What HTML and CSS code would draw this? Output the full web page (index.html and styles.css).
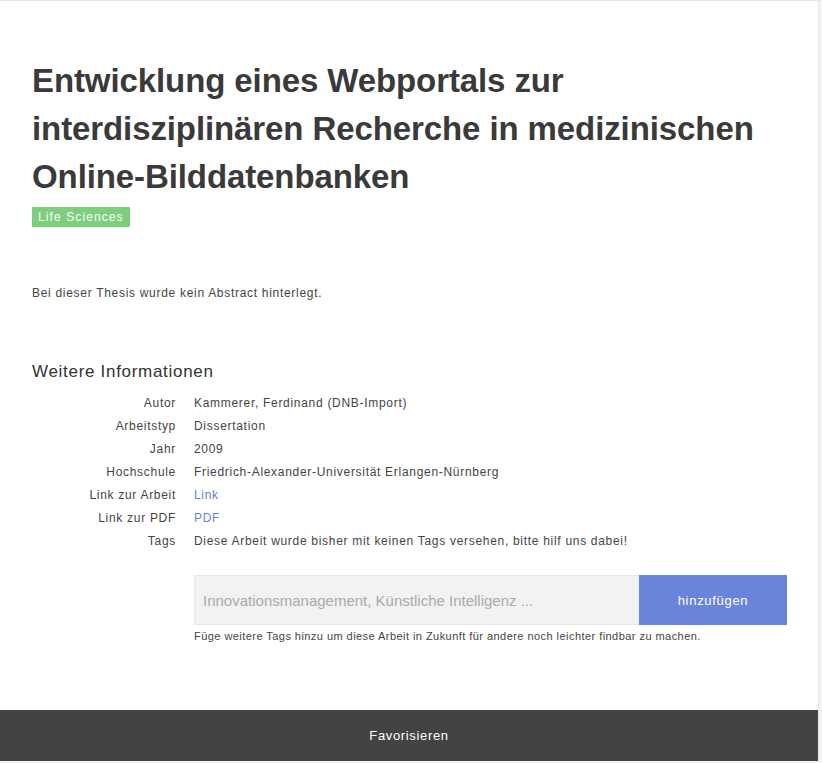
FILE: index.html
```html
<!DOCTYPE html>
<html lang="de">
<head>
<meta charset="utf-8">
<title>Entwicklung eines Webportals</title>
<link rel="stylesheet" href="styles.css">
</head>
<body>
<div class="page">
  <main class="content">
    <h1 class="title">Entwicklung eines Webportals zur interdisziplinären Recherche in medizinischen Online-Bilddatenbanken</h1>
    <span class="badge">Life Sciences</span>
    <p class="abstract">Bei dieser Thesis wurde kein Abstract hinterlegt.</p>
    <h2 class="section-title">Weitere Informationen</h2>
    <dl class="info">
      <dt>Autor</dt><dd>Kammerer, Ferdinand (DNB-Import)</dd>
      <dt>Arbeitstyp</dt><dd>Dissertation</dd>
      <dt>Jahr</dt><dd>2009</dd>
      <dt>Hochschule</dt><dd>Friedrich-Alexander-Universität Erlangen-Nürnberg</dd>
      <dt>Link zur Arbeit</dt><dd><a href="#">Link</a></dd>
      <dt>Link zur PDF</dt><dd><a href="#">PDF</a></dd>
      <dt>Tags</dt><dd>Diese Arbeit wurde bisher mit keinen Tags versehen, bitte hilf uns dabei!</dd>
    </dl>
    <div class="tag-form">
      <div class="tag-row">
        <input class="tag-input" type="text" placeholder="Innovationsmanagement, Künstliche Intelligenz ...">
        <button class="tag-button" type="button">hinzufügen</button>
      </div>
      <p class="tag-hint">Füge weitere Tags hinzu um diese Arbeit in Zukunft für andere noch leichter findbar zu machen.</p>
    </div>
  </main>
  <footer class="footer">Favorisieren</footer>
</div>
</body>
</html>
```

FILE: styles.css
```css
html, body {
  margin: 0;
  padding: 0;
  background: #f4f4f4;
}
body {
  font-family: "Liberation Sans", Arial, sans-serif;
  color: #444;
}
.page {
  width: 820px;
  height: 761px;
  background: #fff;
  border-top: 1px solid #e6e6e6;
  border-right: 2px solid #ececec;
  box-sizing: border-box;
  display: flex;
  flex-direction: column;
}
.content {
  flex: 1;
  padding: 56px 0 0 32px;
}
.title {
  margin: 0;
  font-size: 33px;
  line-height: 48px;
  font-weight: bold;
  color: #3a3a3a;
  width: 760px;
  letter-spacing: -0.1px;
}
.badge {
  display: inline-block;
  margin-top: 6px;
  background: #7dcf7d;
  color: #fff;
  font-size: 12px;
  line-height: 20px;
  padding: 0 6px;
  border-radius: 1px;
  letter-spacing: 1.1px;
}
.abstract {
  margin: 58px 0 0 0;
  font-size: 12px;
  line-height: 16px;
  color: #444;
  letter-spacing: 0.7px;
}
.section-title {
  margin: 60px 0 0 0;
  font-size: 17px;
  font-weight: normal;
  line-height: 22px;
  color: #333;
  letter-spacing: 0.7px;
}
.info {
  margin: 12px 0 0 0;
  display: grid;
  grid-template-columns: 144px auto;
  column-gap: 18px;
  row-gap: 7px;
  font-size: 12px;
  line-height: 16px;
  letter-spacing: 0.7px;
}
.info dt {
  text-align: right;
  color: #444;
}
.info dd {
  margin: 0;
  color: #444;
}
.info a {
  color: #6a80d0;
  text-decoration: none;
}
.tag-form {
  margin: 26px 0 0 162px;
  width: 593px;
}
.tag-row {
  display: flex;
  height: 50px;
}
.tag-input {
  flex: 1;
  border: 1px solid #e8e8e8;
  border-right: none;
  background: #f2f2f2;
  padding: 0 8px;
  font-family: "Liberation Sans", Arial, sans-serif;
  font-size: 15px;
  color: #444;
  outline: none;
}
.tag-input::placeholder {
  color: #aaa;
}
.tag-button {
  width: 148px;
  border: none;
  background: #6a84dc;
  color: #fff;
  font-family: "Liberation Sans", Arial, sans-serif;
  font-size: 13px;
  letter-spacing: 0.7px;
}
.tag-hint {
  margin: 4px 0 0 0;
  font-size: 11px;
  line-height: 14px;
  color: #444;
  letter-spacing: 0.45px;
}
.footer {
  height: 51px;
  background: #434343;
  color: #fff;
  font-size: 13px;
  display: flex;
  align-items: center;
  justify-content: center;
  letter-spacing: 0.65px;
}
```
